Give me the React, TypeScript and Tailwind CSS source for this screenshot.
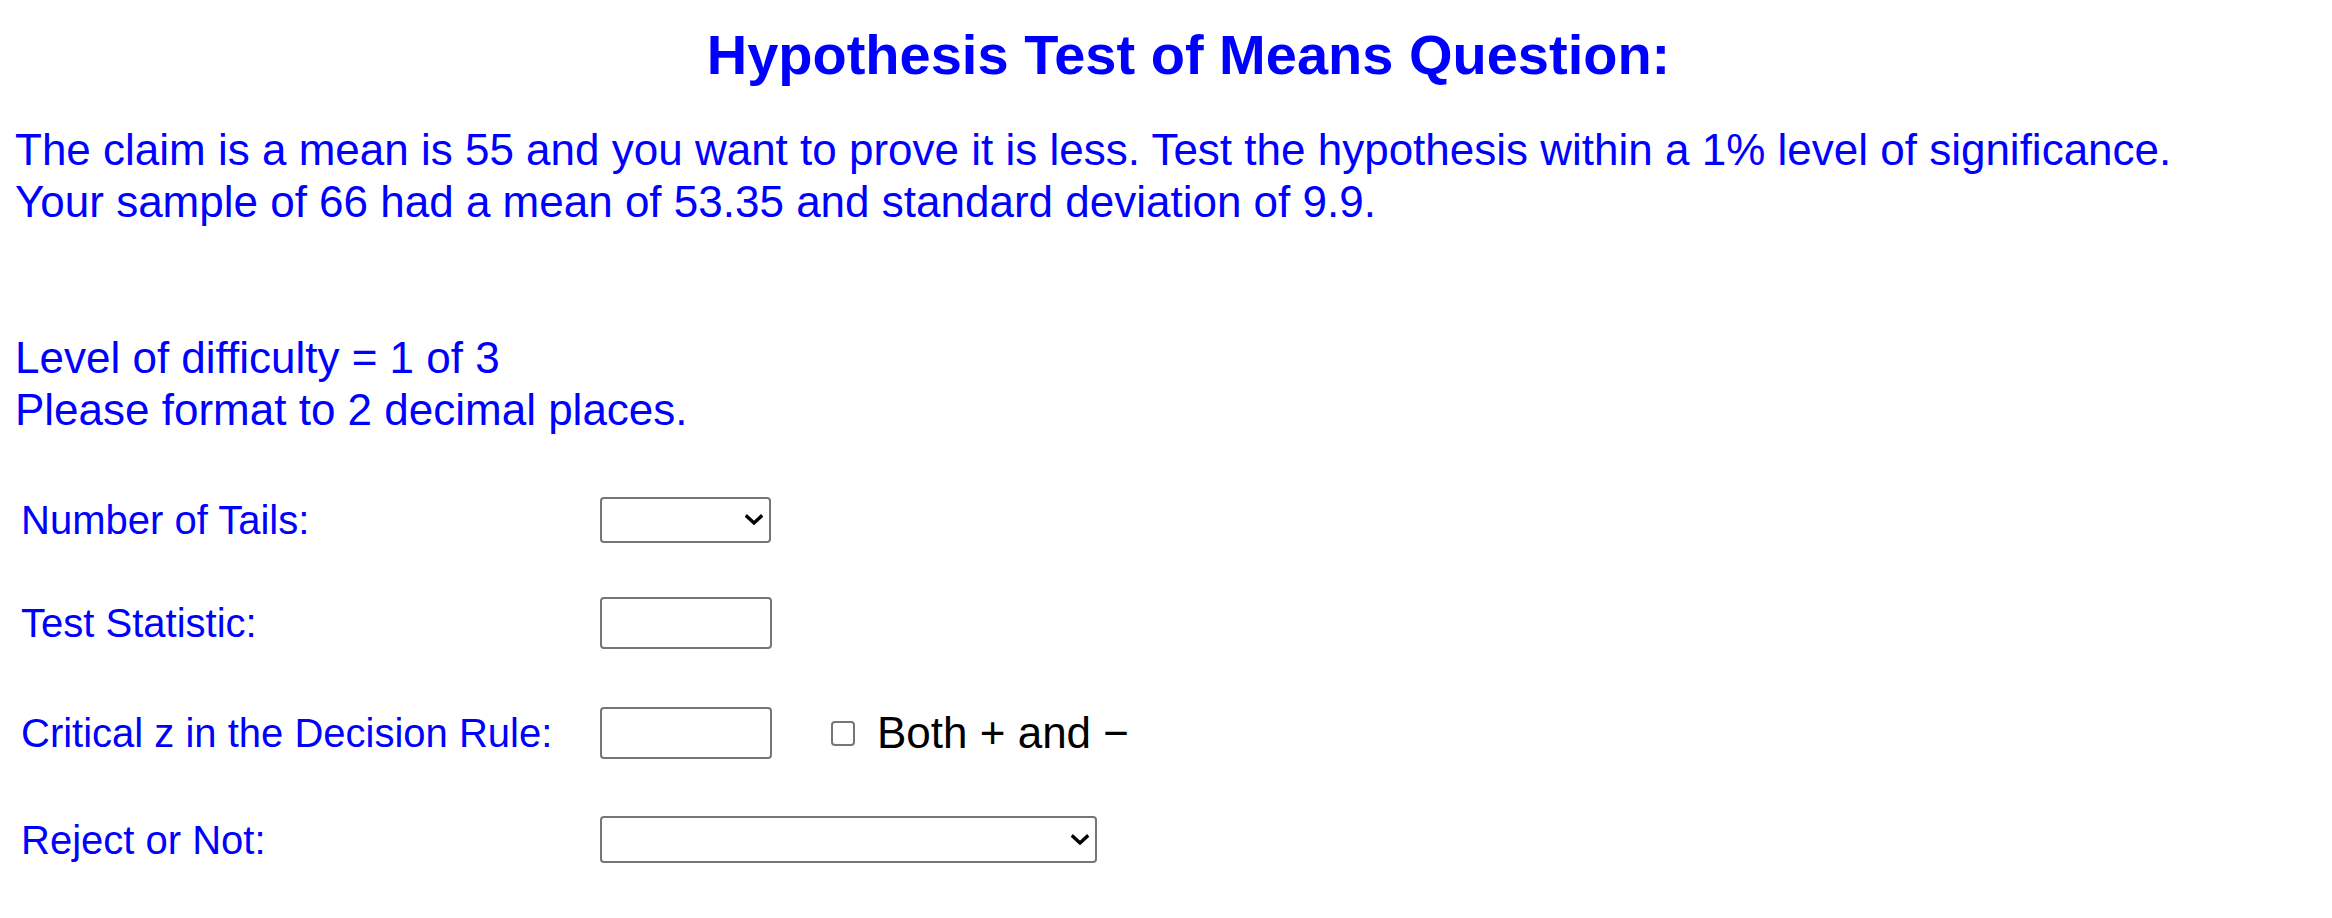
import React from "react";

function Chevron() {
  return (
    <svg
      className="pointer-events-none absolute right-[8px] top-1/2 -translate-y-1/2"
      width="18"
      height="12"
      viewBox="0 0 18 12"
      fill="none"
    >
      <path d="M2 2.5 L9 9 L16 2.5" stroke="#000" strokeWidth="3.4" strokeLinecap="square" />
    </svg>
  );
}

function Select({ w, h }: { w: string; h: string }) {
  return (
    <div className={`relative ${w} ${h}`}>
      <select className="appearance-none w-full h-full border-2 border-[#767676] rounded-[4px] bg-white outline-none">
        <option value=""></option>
      </select>
      <Chevron />
    </div>
  );
}

function TextBox() {
  return (
    <input
      type="text"
      className="w-[172px] h-[52px] border-2 border-[#767676] rounded-[4px] bg-white outline-none"
    />
  );
}

export default function App() {
  return (
    <div className="w-[2332px] h-[918px] bg-white font-['Liberation_Sans',Arial,sans-serif] text-[#0000ff] overflow-hidden">
      <h1 className="pt-[23px] pl-[45px] text-center text-[56px] leading-[64px] font-bold">
        Hypothesis Test of Means Question:
      </h1>
      <div className="mt-[37px] pl-[15px] text-[44px] leading-[52px]">
        <p>
          The claim is a mean is 55 and you want to prove it is less. Test the hypothesis within a 1% level of
          significance.
        </p>
        <p>Your sample of 66 had a mean of 53.35 and standard deviation of 9.9.</p>
        <p className="mt-[104px]">Level of difficulty = 1 of 3</p>
        <p>Please format to 2 decimal places.</p>
      </div>
      <div className="mt-[61px] pl-[21px] flex flex-col text-[40px] leading-[46px]">
        <div className="flex items-center h-[46px]">
          <span className="w-[579px] shrink-0">Number of Tails:</span>
          <Select w="w-[171px]" h="h-[46px]" />
        </div>
        <div className="flex items-center h-[52px] mt-[54px]">
          <span className="w-[579px] shrink-0">Test Statistic:</span>
          <TextBox />
        </div>
        <div className="flex items-center h-[52px] mt-[58px]">
          <span className="w-[579px] shrink-0">Critical z in the Decision Rule:</span>
          <TextBox />
          <label className="flex items-center ml-[59px] text-black text-[44px] leading-[52px]">
            <input
              type="checkbox"
              className="appearance-none w-[24px] h-[25px] border-2 border-[#767676] rounded-[4px] bg-white"
            />
            <span className="ml-[22px]">Both + and −</span>
          </label>
        </div>
        <div className="flex items-center h-[47px] mt-[57px]">
          <span className="w-[579px] shrink-0">Reject or Not:</span>
          <Select w="w-[497px]" h="h-[47px]" />
        </div>
      </div>
    </div>
  );
}
